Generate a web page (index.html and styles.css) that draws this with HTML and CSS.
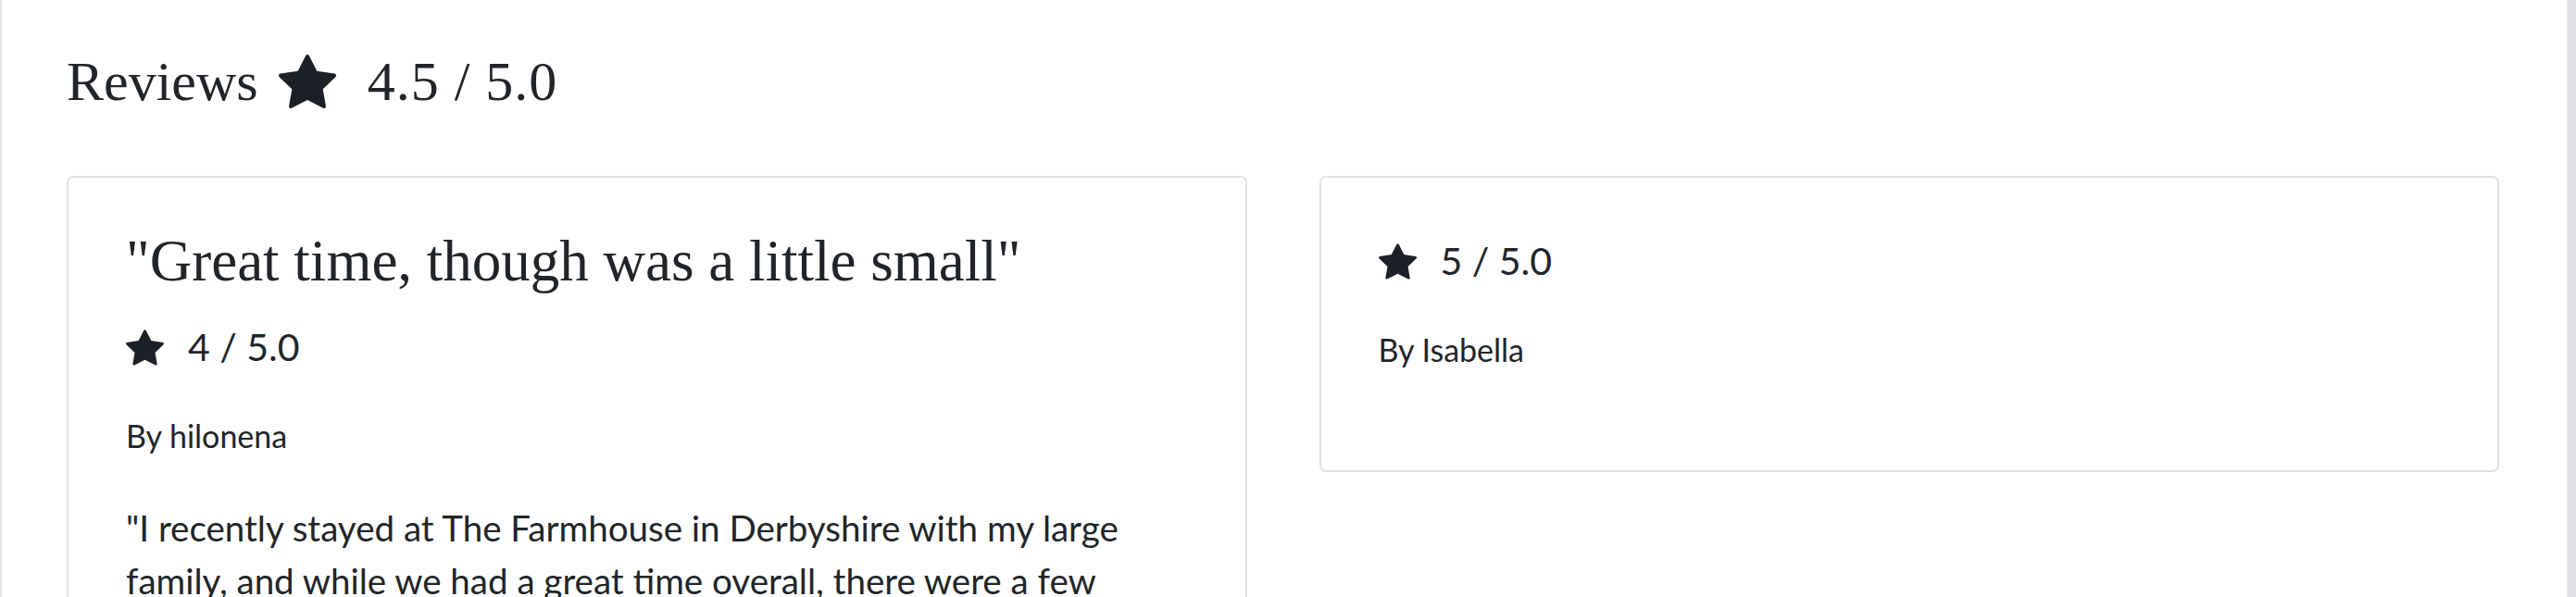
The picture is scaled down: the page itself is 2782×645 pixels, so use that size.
FILE: index.html
```html
<!DOCTYPE html>
<html lang="en">
<head>
<meta charset="utf-8">
<title>Reviews</title>
<link rel="stylesheet" href="styles.css">
</head>
<body>
<div class="page">
  <main class="content">
    <h1 class="reviews-title">
      <span>Reviews</span>
      <svg class="star star-lg" viewBox="0 0 16 16" aria-hidden="true"><path d="M3.612 15.443c-.386.198-.824-.149-.746-.592l.83-4.73L.173 6.765c-.329-.314-.158-.888.283-.95l4.898-.696L7.538.792c.197-.39.73-.39.927 0l2.184 4.327 4.898.696c.441.062.612.636.282.95l-3.522 3.356.83 4.73c.078.443-.36.79-.746.592L8 13.187l-4.389 2.256z"/></svg>
      <span class="score">4.5 / 5.0</span>
    </h1>
    <section class="review-grid">
      <article class="review-card">
        <h2 class="review-heading">"Great time, though was a little small"</h2>
        <div class="rating">
          <svg class="star" viewBox="0 0 16 16" aria-hidden="true"><path d="M3.612 15.443c-.386.198-.824-.149-.746-.592l.83-4.73L.173 6.765c-.329-.314-.158-.888.283-.95l4.898-.696L7.538.792c.197-.39.73-.39.927 0l2.184 4.327 4.898.696c.441.062.612.636.282.95l-3.522 3.356.83 4.73c.078.443-.36.79-.746.592L8 13.187l-4.389 2.256z"/></svg>
          <span>4 / 5.0</span>
        </div>
        <p class="author">By hilonena</p>
        <p class="review-text">"I recently stayed at The Farmhouse in Derbyshire with my large family, and while we had a great time overall, there were a few things that could have been better. The house was lovely and the grounds were beautiful, but with so many of us it did feel a little cramped at times."</p>
      </article>
      <article class="review-card">
        <div class="rating">
          <svg class="star" viewBox="0 0 16 16" aria-hidden="true"><path d="M3.612 15.443c-.386.198-.824-.149-.746-.592l.83-4.73L.173 6.765c-.329-.314-.158-.888.283-.95l4.898-.696L7.538.792c.197-.39.73-.39.927 0l2.184 4.327 4.898.696c.441.062.612.636.282.95l-3.522 3.356.83 4.73c.078.443-.36.79-.746.592L8 13.187l-4.389 2.256z"/></svg>
          <span>5 / 5.0</span>
        </div>
        <p class="author">By Isabella</p>
      </article>
    </section>
  </main>
  <div class="scrollbar"></div>
</div>
</body>
</html>
```
FILE: styles.css
```css
html, body {
  margin: 0;
  padding: 0;
  background: #ffffff;
}

body {
  color: #212529;
  font-family: "Lato", "Noto Sans", sans-serif;
}

.page {
  display: flex;
  min-height: 100vh;
  border-left: 2px solid #e3e3e3;
}

.content {
  flex: 1;
  padding: 52px 73px 0 70px;
}

.scrollbar {
  width: 9px;
  background: #e0e0e5;
  border-left: 1px solid #ececf0;
}

.reviews-title {
  display: flex;
  align-items: center;
  margin: 0;
  font-family: "Liberation Serif", serif;
  font-weight: 400;
  font-size: 60px;
  line-height: 72px;
}

.score {
  letter-spacing: 1px;
}

.star {
  width: 41px;
  height: 41px;
  fill: #1c2127;
  flex: none;
}

.star-lg {
  width: 62px;
  height: 62px;
  margin: 0 34px 0 22px;
}

.review-grid {
  display: grid;
  grid-template-columns: 1fr 1fr;
  column-gap: 78px;
  align-items: start;
  margin-top: 66px;
}

.review-card {
  border: 2px solid #e2e2e2;
  border-radius: 7px;
  padding: 60px 62px 59px;
  min-width: 0;
}

.review-heading {
  margin: 0 0 32px;
  font-family: "Liberation Serif", serif;
  font-weight: 400;
  font-size: 63px;
  line-height: 61px;
}

.rating {
  display: flex;
  align-items: center;
  gap: 26px;
  font-size: 41px;
  line-height: 60px;
  margin-bottom: 40px;
}

.author {
  margin: 0 0 46px;
  font-size: 34px;
  line-height: 51px;
}

.review-text {
  margin: 0;
  font-size: 38.5px;
  line-height: 57px;
}
```
